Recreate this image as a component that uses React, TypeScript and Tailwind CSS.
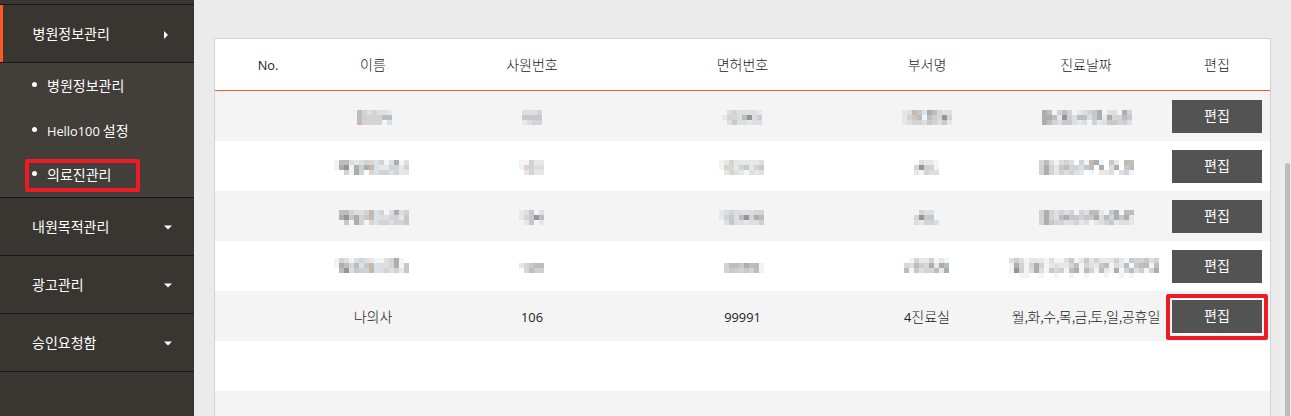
const FONT = "font-['Noto_Sans_CJK_KR',sans-serif]";

const PALETTE: Record<string, string> = {
  '1': '#92959c',
  '2': '#adadae',
  '3': '#bbbdbf',
  '4': '#c8c8ca',
  '5': '#d3d3d4',
  '6': '#dddedf',
  '7': '#e7e7e8',
  '8': '#f1f5f8',
  b: '#d6e3ec',
  g: '#c8d0d4',
  t: '#ddd5cc',
  n: '#c6b8aa',
  y: '#f7f2ed',
};

type Blocks = { x: number; y: number; rows: string[] };

/** Pixelated stand-in for private text; x is the offset from the column's left edge. */
function Mosaic({ x, y, rows, width }: Blocks & { width: number }) {
  return (
    <svg width={width} height={50} shapeRendering="crispEdges" className="block shrink-0" aria-hidden="true">
      {rows.flatMap((row, r) =>
        row.split('').map((c, i) =>
          PALETTE[c] ? (
            <rect key={`${r}-${i}`} x={x + i * 5} y={y + r * 5} width={5} height={5} fill={PALETTE[c]} />
          ) : null,
        ),
      )}
    </svg>
  );
}

const WIDTHS = [104, 214, 207, 162, 156];

const HIDDEN: Blocks[][] = [
  [
    { x: 31, y: 19, rows: ['y3565667.', 'y3g555338', '.n5555.6.'] },
    { x: 97, y: 19, rows: ['6665', '4444', '7655'] },
    { x: 83, y: 19, rows: ['86566667', '75t6316g', '.6466766'] },
    { x: 56, y: 19, rows: ['76n4b23tb6', '754n83gt15', '7655645647'] },
    { x: 29, y: 19, rows: ['y2385358765428b6825', 'y22371g63364272t534', '.2356446768576445g6'] },
  ],
  [
    { x: 13, y: 19, rows: ['y336765tb586286', 'y2182g2nb775575', '..5y25.t6556577'] },
    { x: 94, y: 19, rows: ['y8577', 'yt5b6', '.7577'] },
    { x: 80, y: 19, rows: ['y75777776', 'y5t754754', '.75678676'] },
    { x: 68, y: 19, rows: ['.6778', 't1g58', '7y566'] },
    { x: 31, y: 19, rows: ['t36y656.58n28.47.n3', '52574355643.2.62.43', '5257565b7.8.776.658'] },
  ],
  [
    { x: 13, y: 19, rows: ['y335665nb586265', 'y214254nb665574', '..4y25.tb556554'] },
    { x: 94, y: 19, rows: ['76486', '7t413', '.7487'] },
    { x: 80, y: 19, rows: ['7656666t5', '754631523', '.6466766g'] },
    { x: 68, y: 19, rows: ['.5668', 't1448', '67556'] },
    { x: 31, y: 19, rows: ['525656585bn378428n3', '5256324454426352427', '52455b6576876547667'] },
  ],
  [
    { x: 13, y: 17, rows: ['y5686567886528.', 'y23t3b4nb66t284', '.n164g5nb656574'] },
    { x: 94, y: 22, rows: ['7t433', '.t3gg'] },
    { x: 85, y: 22, rows: ['533423n8', '54g54538'] },
    { x: 58, y: 17, rows: ['.y5775878', 't63gt2723', '38465t372'] },
    {
      x: 1,
      y: 17,
      rows: [
        '6g6877786886487475777578455465',
        'y258525876775385b7438673843n83',
        'y1g862684tg8328n5837828536g8t2',
        '..8y..8..8..8..8...8..8.8.....',
      ],
    },
  ],
];

const ROWS: { cells?: string[]; marked?: boolean; hidden?: Blocks[] }[] = [
  { hidden: HIDDEN[0] },
  { hidden: HIDDEN[1] },
  { hidden: HIDDEN[2] },
  { hidden: HIDDEN[3] },
  { cells: ['나의사', '106', '99991', '4진료실', '월,화,수,목,금,토,일,공휴일'], marked: true },
  {},
  {},
];

const GRID = 'grid grid-cols-[106px_104px_214px_207px_162px_156px_106px]';

/** Sets Latin letters and digits slightly smaller than the Hangul beside them. */
function Label({ children }: { children: string }) {
  return (
    <span className="whitespace-pre">
      {children.split(/([A-Za-z0-9.]+|,)/).map((part, i) =>
        part === ',' ? (
          <span key={i} className="tracking-[-0.7px]">
            ,
          </span>
        ) : /^[A-Za-z0-9.]/.test(part) ? (
          <span key={i} className="font-['Open_Sans',sans-serif] text-[12.8px] leading-none font-normal">
            {part}
          </span>
        ) : (
          part
        ),
      )}
    </span>
  );
}

function MenuItem({ label }: { label: string }) {
  return (
    <div className="flex h-[58px] shrink-0 items-center justify-between border-b border-[#171819] pr-[22px] pb-[2px] pl-8">
      <Label>{label}</Label>
      <svg width="8" height="5" viewBox="0 0 8 5" className="mt-[3px]">
        <path d="M0 .5h8L4 4.5z" fill="#fff" />
      </svg>
    </div>
  );
}

function SubItem({ label, marked }: { label: string; marked?: boolean }) {
  return (
    <li className="relative flex h-[44.5px] items-center pl-8">
      <span className="mr-[10px] -mt-px size-[5px] rounded-full bg-white" />
      <Label>{label}</Label>
      {marked && (
        <span className="absolute top-[7px] left-[25px] h-[33px] w-[115px] rounded-[2px] border-4 border-[#ed1c24]" />
      )}
    </li>
  );
}

function Sidebar() {
  return (
    <nav className="flex w-[194px] shrink-0 flex-col bg-[#393530] text-white">
      <div className="h-[5px] shrink-0 border-b border-[#171819]" />
      <div className="flex h-[58px] shrink-0 border-b border-[#171819]">
        <div className="w-[3px] bg-[#ff5722]" />
        <div className="flex flex-1 items-center justify-between pr-[26px] pb-[2px] pl-[29.5px]">
          <Label>병원정보관리</Label>
          <svg width="4" height="8" viewBox="0 0 4 8" className="mt-[5px]">
            <path d="M0 0v8l4-4z" fill="#fff" />
          </svg>
        </div>
      </div>
      <ul className="h-[135px] shrink-0 border-b border-[#171819] bg-[#423e39]">
        <SubItem label="병원정보관리" />
        <SubItem label="Hello100 설정" />
        <SubItem label="의료진관리" marked />
      </ul>
      <MenuItem label="내원목적관리" />
      <MenuItem label="광고관리" />
      <MenuItem label="승인요청함" />
    </nav>
  );
}

export default function App() {
  return (
    <div className={`flex h-[416px] w-[1291px] overflow-hidden bg-[#ebebeb] text-[14px] leading-5 ${FONT}`}>
      <Sidebar />
      <main className="flex-1 pt-[38px] pl-5">
        <section className="h-[420px] w-[1057px] border border-[#d2d2d4] bg-white font-light text-[#222]">
          <div className={`${GRID} h-[52px] items-center border-b border-[#f15a32] pb-[2px] text-center`}>
            {['No.', '이름', '사원번호', '면허번호', '부서명', '진료날짜', '편집'].map((h) => (
              <div key={h}>
                <Label>{h}</Label>
              </div>
            ))}
          </div>
          {ROWS.map((row, r) => (
            <div key={r} className={`${GRID} h-[50px] ${r % 2 === 0 ? 'bg-[#f4f4f4]' : 'bg-white'}`}>
              <div />
              {WIDTHS.map((w, i) => (
                <div key={i} className="flex items-center justify-center whitespace-nowrap">
                  {row.hidden && <Mosaic {...row.hidden[i]} width={w} />}
                  {row.cells && <Label>{row.cells[i]}</Label>}
                </div>
              ))}
              <div className="relative pt-[9px] pl-2">
                {(row.hidden || row.cells) && (
                  <button className="flex h-[33px] w-[90px] items-center justify-center bg-[#535353] pb-[3px] font-normal text-white">
                    편집
                  </button>
                )}
                {row.marked && (
                  <span className="absolute top-[3px] left-[2px] h-[46px] w-[102px] rounded-[2px] border-4 border-[#ed1c24]" />
                )}
              </div>
            </div>
          ))}
        </section>
      </main>
      <div className="w-[6px] shrink-0 pt-[163px]">
        <div className="h-[260px] w-[5px] rounded-t-[3px] bg-[#bdbdbd]" />
      </div>
    </div>
  );
}
